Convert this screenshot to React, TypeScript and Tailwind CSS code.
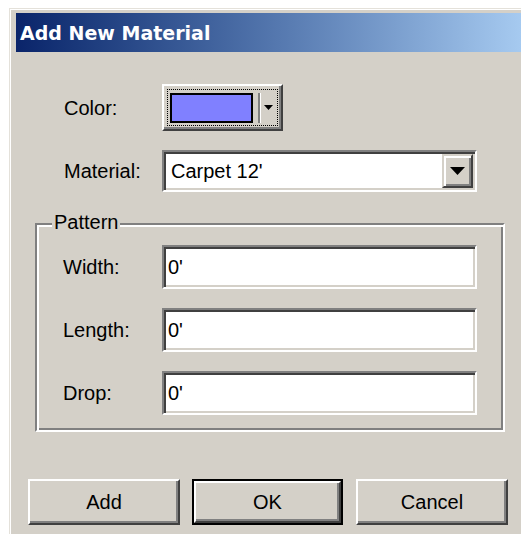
import React from "react";

const face = "bg-[#d4d0c8]";

function Sunken({ className = "", children }: { className?: string; children?: React.ReactNode }) {
  return (
    <div
      className={`border-2 border-t-[#808080] border-l-[#808080] border-b-white border-r-white bg-white shadow-[inset_2px_2px_0_#404040,inset_-2px_-2px_0_#d4d0c8] ${className}`}
    >
      {children}
    </div>
  );
}

function TextBox({ value }: { value: string }) {
  return (
    <Sunken className="w-[315px] h-[44px] flex items-center pl-[4px]">
      <span className="leading-none">{value}</span>
    </Sunken>
  );
}

function PushButton({ label, isDefault = false }: { label: string; isDefault?: boolean }) {
  const inner = (
    <div className="w-full h-full flex items-center justify-center border-2 border-t-white border-l-white border-b-[#404040] border-r-[#404040] shadow-[inset_-2px_-2px_0_#808080] bg-[#d4d0c8]">
      <span className="leading-none">{label}</span>
    </div>
  );
  if (isDefault) {
    return <div className="w-[151px] h-[46px] border-2 border-black">{inner}</div>;
  }
  return <div className="w-[152px] h-[46px]">{inner}</div>;
}

function ColorButton() {
  return (
    <div className="w-[121px] h-[47px] border-2 border-t-white border-l-white border-b-[#404040] border-r-[#404040] shadow-[inset_-2px_-2px_0_#808080] p-[3px]">
      <div className="w-full h-full border border-dotted border-black flex items-center pl-[2px]">
        <div className="w-[83px] h-[30px] border-2 border-black bg-[#8080ff]" />
        <div className="ml-[5px] h-[30px] w-[3px] border-l-2 border-l-[#808080] border-r border-r-white" />
        <svg width="9" height="6" viewBox="0 0 9 6" className="ml-[3px]">
          <polygon points="0,0 9,0 4.5,5" fill="#000" />
        </svg>
      </div>
    </div>
  );
}

function ComboBox({ value }: { value: string }) {
  return (
    <Sunken className="w-[315px] h-[42px] flex items-center pl-[7px] pr-[2px]">
      <span className="flex-1 leading-none">{value}</span>
      <div className="w-[31px] h-[34px] border-2 border-t-[#d4d0c8] border-l-[#d4d0c8] border-b-[#404040] border-r-[#404040] shadow-[inset_2px_2px_0_#fff,inset_-2px_-2px_0_#808080] bg-[#d4d0c8] flex items-center justify-center">
        <svg width="15" height="8" viewBox="0 0 15 8">
          <polygon points="0,0 15,0 7.5,8" fill="#000" />
        </svg>
      </div>
    </Sunken>
  );
}

export default function App() {
  return (
    <div className="w-[521px] h-[534px] overflow-hidden bg-white">
      <div
        className={`ml-[9px] mt-[8px] w-[512px] h-[540px] border-l border-t border-[#e4e1da] ${face}`}
      >
        <div className={`h-full border-l border-t border-white pl-[5px] pt-[3px]`}>
          <div className="h-[39px] bg-linear-to-r from-[#0a246a] to-[#a6caf0] flex items-center pl-[4px] pt-[2px]">
            <span className="text-white font-bold text-[19px] leading-none font-['DejaVu_Sans',sans-serif]">
              Add New Material
            </span>
          </div>

          <div className="flex flex-col text-[20px] text-black font-['Liberation_Sans',Arial,sans-serif]">
            <div className="mt-[32px] flex items-center h-[47px]">
              <span className="w-[146px] pl-[48px] leading-none">Color:</span>
              <ColorButton />
            </div>

            <div className="mt-[19px] flex items-center h-[42px]">
              <span className="w-[146px] pl-[48px] leading-none">Material:</span>
              <ComboBox value="Carpet 12'" />
            </div>

            <div className="relative mt-[31px] ml-[19px] w-[470px] h-[209px] border-2 border-t-[#808080] border-l-[#808080] border-b-white border-r-white shadow-[inset_2px_2px_0_#fff,inset_-2px_-2px_0_#808080]">
              <span className={`absolute left-[15px] top-[-13px] px-[2px] leading-none ${face}`}>
                Pattern
              </span>
              <div className="flex flex-col gap-[19px] pt-[20px]">
                {[
                  ["Width:", "0'"],
                  ["Length:", "0'"],
                  ["Drop:", "0'"],
                ].map(([label, value]) => (
                  <div key={label} className="flex items-center h-[44px]">
                    <span className="w-[125px] pl-[26px] leading-none">{label}</span>
                    <TextBox value={value} />
                  </div>
                ))}
              </div>
            </div>

            <div className="mt-[47px] ml-[12px] flex gap-[12px]">
              <PushButton label="Add" />
              <PushButton label="OK" isDefault />
              <div className="ml-[1px]">
                <PushButton label="Cancel" />
              </div>
            </div>
          </div>
        </div>
      </div>
    </div>
  );
}
